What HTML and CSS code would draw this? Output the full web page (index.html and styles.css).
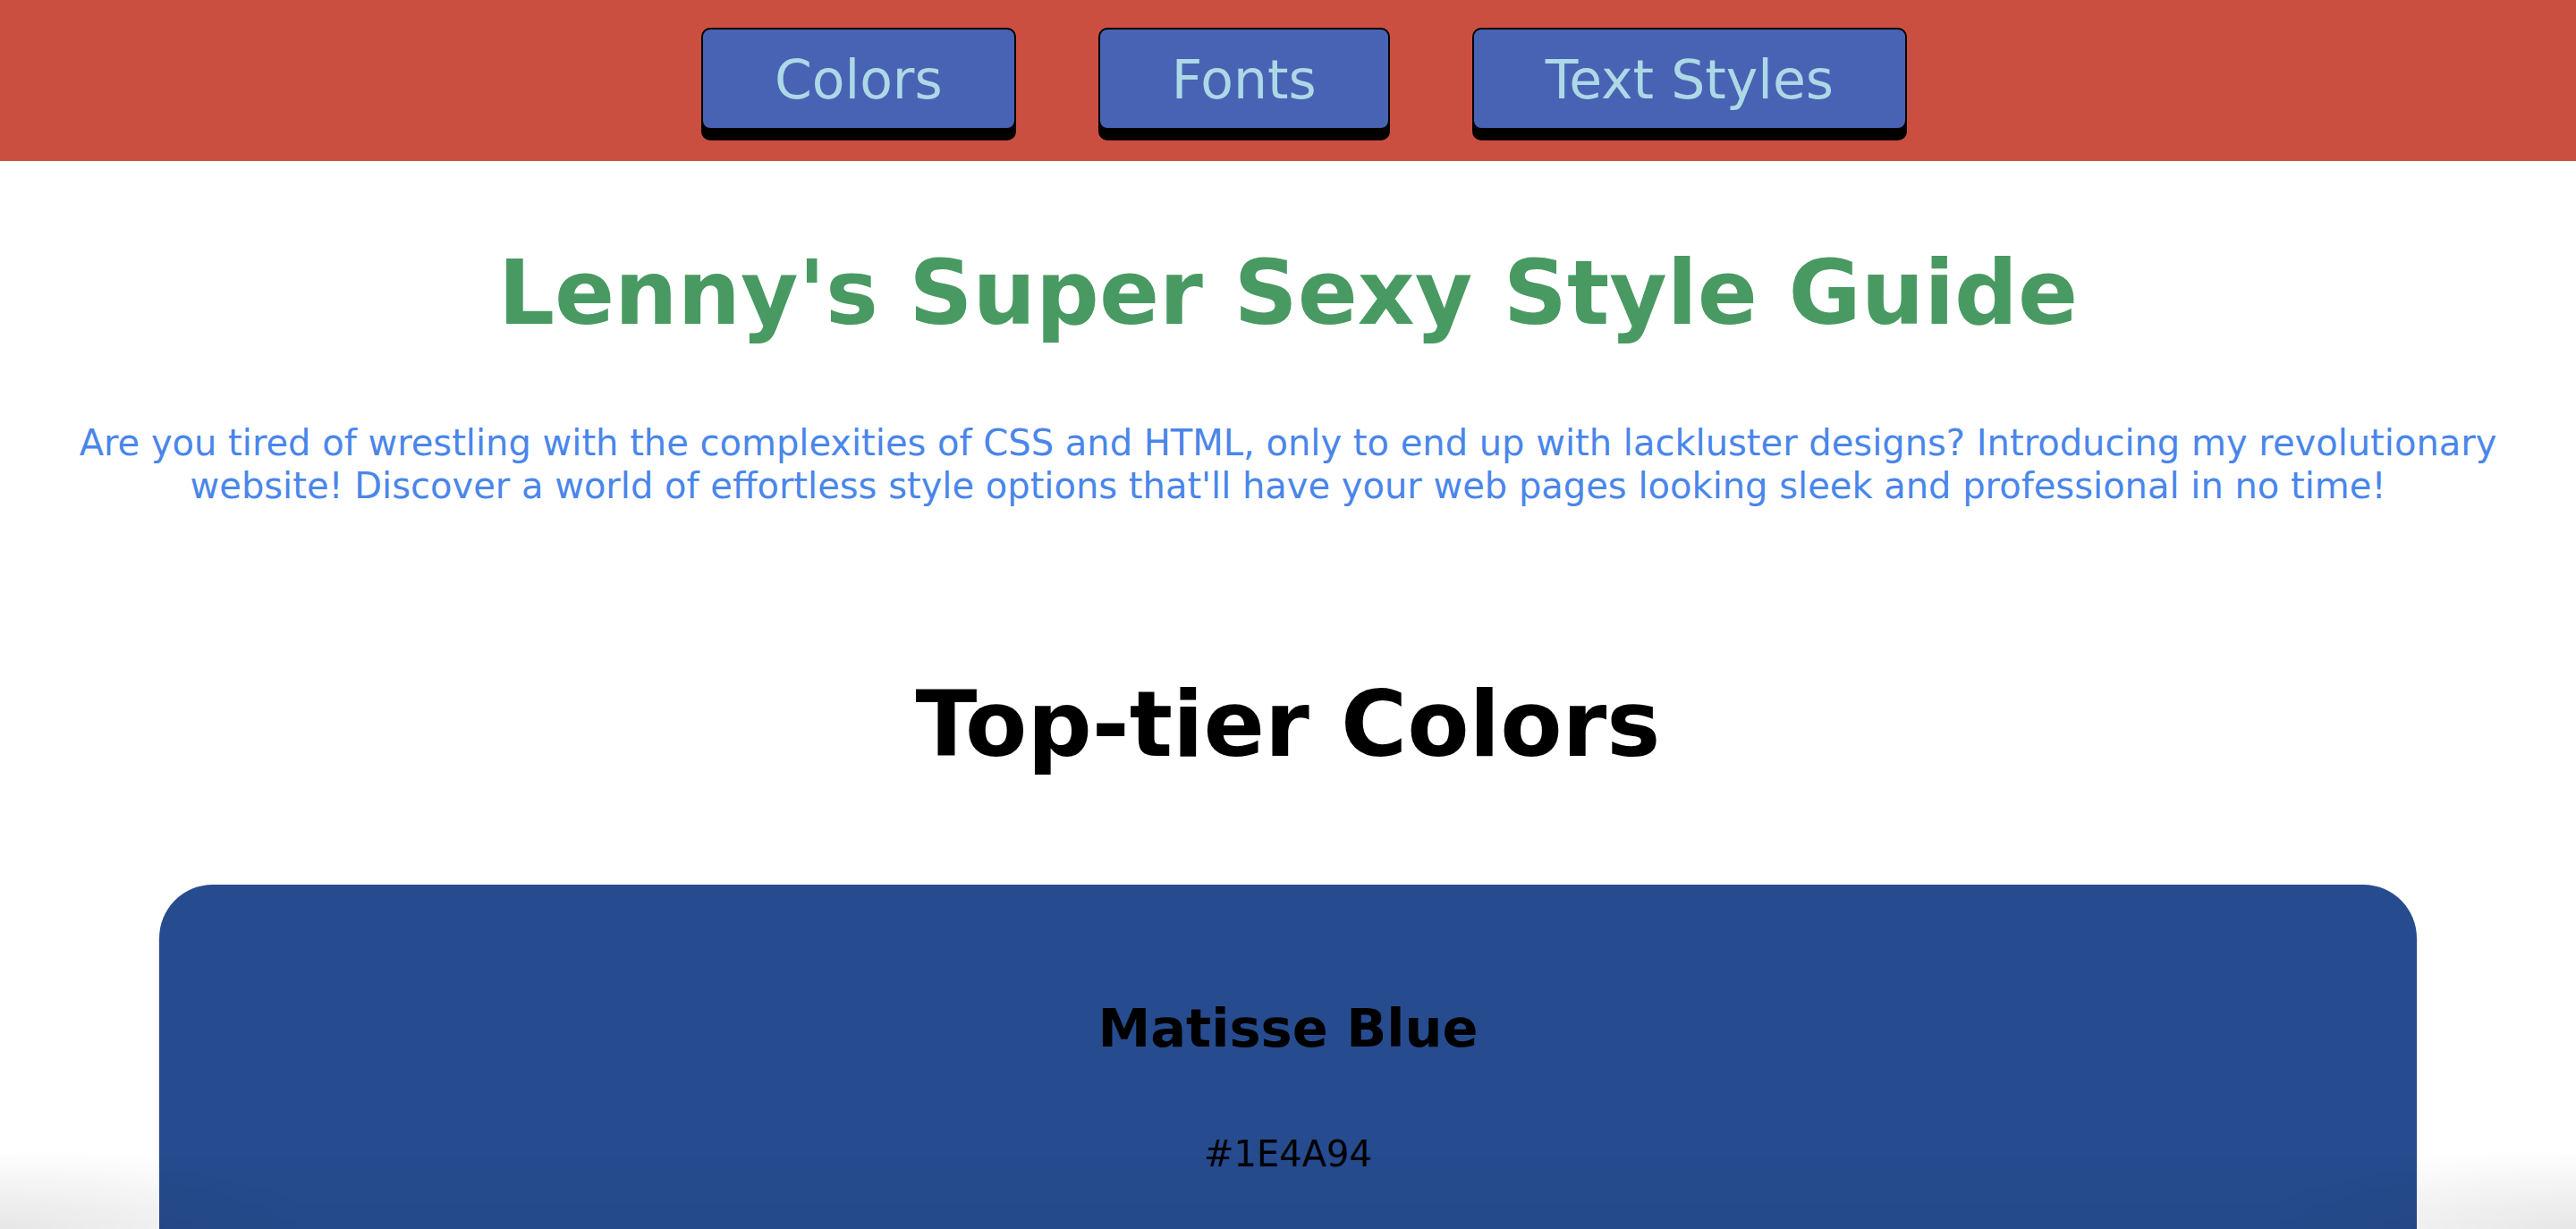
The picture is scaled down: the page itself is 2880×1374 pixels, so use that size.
FILE: index.html
```html
<!DOCTYPE html>
<html lang="en">
<head>
<meta charset="utf-8">
<title>Lenny's Super Sexy Style Guide</title>
<link rel="stylesheet" href="styles.css">
</head>
<body>
<header class="topbar">
  <ul class="nav">
    <li><a class="nav-btn" href="#colors">Colors</a></li>
    <li><a class="nav-btn" href="#fonts">Fonts</a></li>
    <li><a class="nav-btn" href="#text-styles">Text Styles</a></li>
  </ul>
</header>
<main>
  <h1 class="title">Lenny's Super Sexy Style Guide</h1>
  <p class="intro">Are you tired of wrestling with the complexities of CSS and HTML, only to end up with lackluster designs? Introducing my revolutionary website! Discover a world of effortless style options that'll have your web pages looking sleek and professional in no time!</p>
  <section class="colors" id="colors">
    <h2 class="section-title">Top-tier Colors</h2>
    <div class="swatch swatch-matisse">
      <h3 class="swatch-name">Matisse Blue</h3>
      <p class="swatch-hex">#1E4A94</p>
    </div>
  </section>
</main>
<div class="bottom-shade"></div>
</body>
</html>
```

FILE: styles.css
```css
html, body {
  margin: 0;
  padding: 0;
}

body {
  font-family: "DejaVu Sans", Verdana, sans-serif;
  background: #ffffff;
  color: #000000;
}

.topbar {
  background: #cb4f40;
  height: 180px;
  box-sizing: border-box;
  padding-top: 31px;
}

.nav {
  list-style: none;
  margin: 0;
  padding: 0 0 0 36px;
  display: flex;
  justify-content: center;
  gap: 92px;
}

.nav-btn {
  display: block;
  padding: 21px 80px 19px;
  font-size: 60px;
  line-height: 70px;
  color: #add8e6;
  background: #4863b4;
  border: 2px solid #000000;
  border-radius: 10px;
  box-shadow: 0 12px 0 #000000;
  text-decoration: none;
}

.title {
  margin: 90px 0 0;
  font-size: 99px;
  font-weight: bold;
  line-height: normal;
  text-align: center;
  color: #499a62;
}

.intro {
  margin: 86px 0 0;
  font-size: 40px;
  line-height: 48px;
  text-align: center;
  color: #4a86ea;
}

.section-title {
  margin: 184px 0 0;
  font-size: 101px;
  font-weight: bold;
  line-height: normal;
  text-align: center;
}

.swatch {
  margin: 120px 178px 0;
  padding: 126px 40px 300px;
  border-radius: 60px;
  text-align: center;
}

.swatch-matisse {
  background: #264c8f;
}

.swatch-name {
  margin: 0;
  font-size: 59px;
  font-weight: bold;
  line-height: normal;
}

.swatch-hex {
  margin: 83px 0 0;
  font-size: 40px;
  line-height: normal;
}

.bottom-shade {
  position: fixed;
  left: 0;
  right: 0;
  bottom: 0;
  height: 90px;
  pointer-events: none;
  background:
    radial-gradient(ellipse 360px 90px at 0% 100%, rgba(0, 0, 0, 0.08), rgba(0, 0, 0, 0)),
    radial-gradient(ellipse 360px 90px at 100% 100%, rgba(0, 0, 0, 0.08), rgba(0, 0, 0, 0)),
    linear-gradient(to bottom, rgba(0, 0, 0, 0), rgba(0, 0, 0, 0.02));
}
```
